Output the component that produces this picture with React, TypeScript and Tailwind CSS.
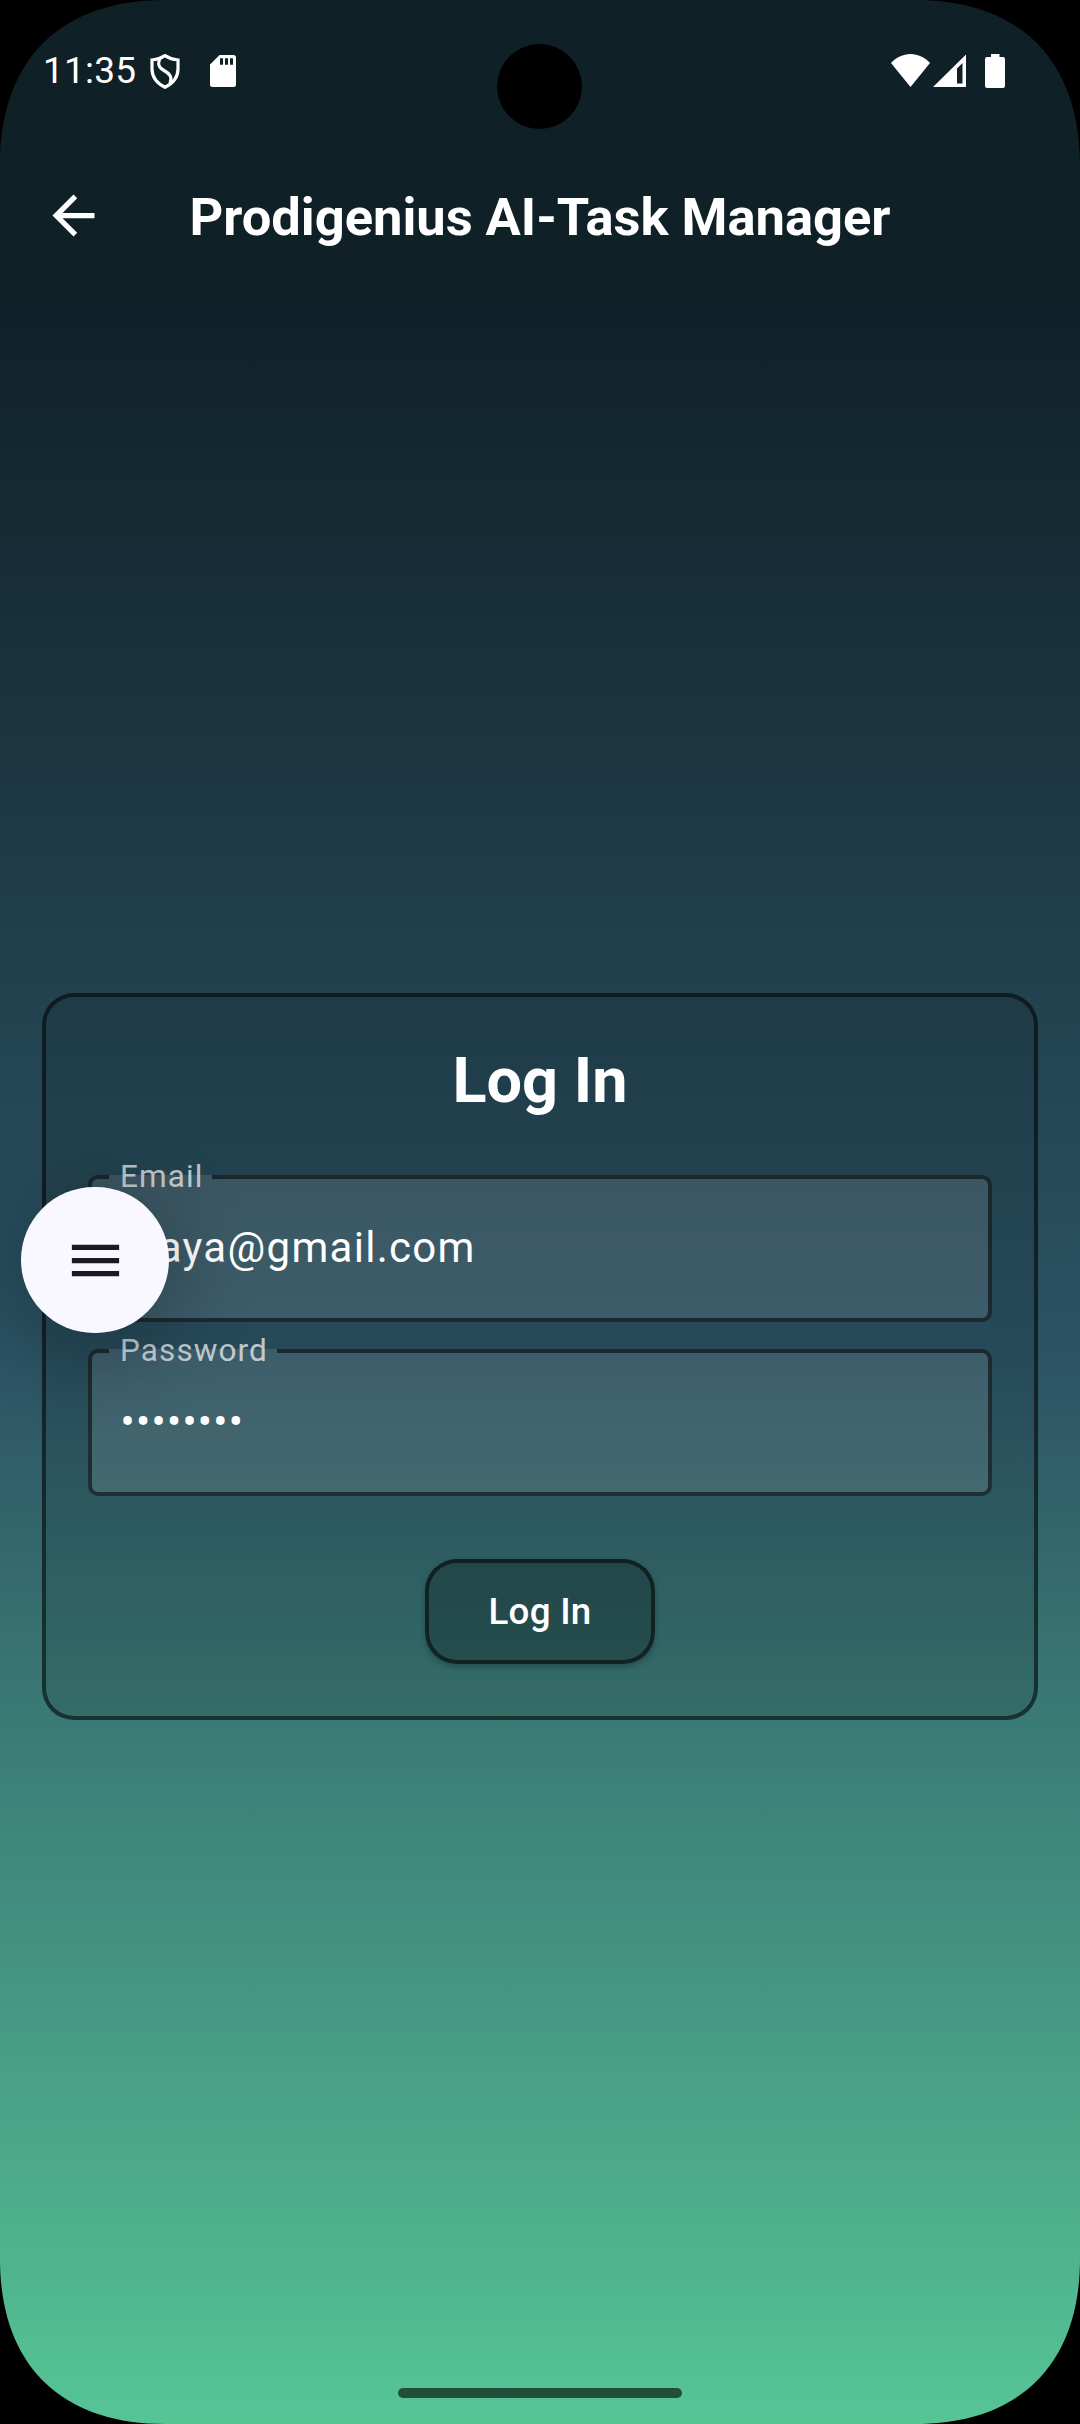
import React from "react";

function Corner({ className }: { className: string }) {
  return (
    <svg className={`absolute h-[165px] w-[165px] ${className}`} viewBox="0 0 165 165">
      <path d="M0 0H165C60 0 0 60 0 165Z" fill="#000" />
    </svg>
  );
}

function StatusBar() {
  return (
    <div className="flex h-[142px] items-start justify-between pl-[43px] pr-[75px] pt-[50px] text-white">
      <div className="flex items-start">
        <span className="-mt-px w-[107px] text-[37px] leading-[43px] tracking-[0.2px]">11:35</span>
        <svg className="mt-1 h-[35px] w-[30px]" viewBox="0 0 30 35" fill="none" stroke="#fff" strokeWidth="3.2">
          <path d="M15 1.600C11 4.200 6.500 5.600 2 6V15C2 23.500 7.500 29.500 15 33.300C22.500 29.500 28 23.500 28 15V6C23.500 5.600 19 4.200 15 1.600Z" />
          <path d="M10.500 3.500C7 10 8.500 13.500 14 16.500C20.500 20 22.500 23.500 20 29.500" />
        </svg>
        <svg className="ml-[30px] mt-[5px] h-8 w-[26px]" viewBox="0 0 26 32" fill="#fff">
          <path
            fillRule="evenodd"
            d="M9.500 0H23.500Q26 0 26 2.500V29.500Q26 32 23.500 32H2.500Q0 32 0 29.500V9.500ZM10 3.300V9.700H13V3.300ZM15 3.300V9.700H18V3.300ZM20 3.300V9.700H23V3.300Z"
          />
        </svg>
      </div>
      <div className="flex items-start pt-1">
        <svg className="h-[33px] w-[39px]" viewBox="0 0 39 33" fill="#fff">
          <path d="M19.500 33L0 9C5 3.500 12 0 19.500 0S34 3.500 39 9Z" />
        </svg>
        <svg className="ml-[3px] h-[33px] w-[33px]" viewBox="0 0 33 33" fill="#fff">
          <path fillRule="evenodd" d="M33 0.500V33H0ZM29.500 9L24 14.500V29.500H29.500Z" />
        </svg>
        <svg className="ml-[19px] h-[34px] w-5" viewBox="0 0 20 34" fill="#fff">
          <path d="M6 0H14.500V3H18Q20 3 20 5V32Q20 34 18 34H2Q0 34 0 32V5Q0 3 2 3H6Z" />
        </svg>
      </div>
    </div>
  );
}

function AppBar() {
  return (
    <header className="grid h-[147px] grid-cols-[148px_1fr_148px] items-center text-white">
      <svg className="ml-[42px] h-[63px] w-[63px]" viewBox="0 0 24 24" fill="#fff">
        <path d="M20 11H7.830l5.590-5.590L12 4l-8 8 8 8 1.410-1.410L7.830 13H20v-2z" />
      </svg>
      <h1 className="whitespace-nowrap pt-[2px] text-center text-[52.5px] font-bold leading-[62px] tracking-[-0.03px]">
        Prodigenius AI-Task Manager
      </h1>
    </header>
  );
}

function Field({ label, value }: { label: string; value: string }) {
  return (
    <fieldset className="h-[165px] rounded-[10px] border-4 border-black/54 bg-white/11 pl-[17px]">
      <legend className="h-10 pl-[11px] pr-[9px] text-[31.5px] leading-10 tracking-[1.1px] text-white/70">
        {label}
      </legend>
      <div className="pl-[11.5px] pt-[19px] text-[42px] leading-[63px] tracking-[1.3px] text-white">{value}</div>
    </fieldset>
  );
}

function LoginCard() {
  return (
    <form className="flex h-[727px] flex-col rounded-[32px] border-4 border-black/54 bg-black/10 px-[42px] pt-[42px]">
      <h2 className="text-center text-[63px] font-bold leading-[84px] text-white">Log In</h2>
      <div className="mt-[34px] flex flex-col gap-[9px]">
        <Field label="Email" value="maya@gmail.com" />
        <Field label="Password" value="••••••••" />
      </div>
      <button
        type="button"
        className="mt-[63px] h-[105px] w-[230px] self-center rounded-[32px] border-4 border-black/54 bg-black/24 text-[36.75px] font-medium leading-[52px] tracking-[0.26px] text-white shadow-[0_3px_6px_rgba(0,0,0,0.25)]"
      >
        Log In
      </button>
    </form>
  );
}

function MenuButton() {
  return (
    <button
      type="button"
      className="absolute left-[21px] top-[1187px] flex h-[146px] w-[148px] items-center justify-center rounded-full bg-[#f9f7ff] shadow-[0_12px_80px_10px_rgba(0,0,0,0.24)]"
    >
      <svg className="h-[63px] w-[63px]" viewBox="0 0 24 24" fill="#1b1a20">
        <path d="M3 18h18v-2H3v2zm0-5h18v-2H3v2zm0-7v2h18V6H3z" />
      </svg>
    </button>
  );
}

export default function App() {
  return (
    <div className="relative flex h-[2424px] w-[1080px] flex-col overflow-hidden bg-[#0f2027] font-['Roboto',sans-serif]">
      <StatusBar />
      <AppBar />
      <main className="flex flex-1 flex-col justify-center bg-[linear-gradient(180deg,#0f2027_0%,#2c5364_50%,#56c596_100%)] px-[42px]">
        <LoginCard />
      </main>
      <MenuButton />
      <div className="absolute left-[497px] top-[44px] h-[85px] w-[85px] rounded-full bg-black" />
      <div className="absolute bottom-[26px] left-[398px] h-[10px] w-[284px] rounded-full bg-black/60" />
      <Corner className="left-0 top-0" />
      <Corner className="right-0 top-0 -scale-x-100" />
      <Corner className="bottom-0 left-0 -scale-y-100" />
      <Corner className="bottom-0 right-0 -scale-100" />
    </div>
  );
}
